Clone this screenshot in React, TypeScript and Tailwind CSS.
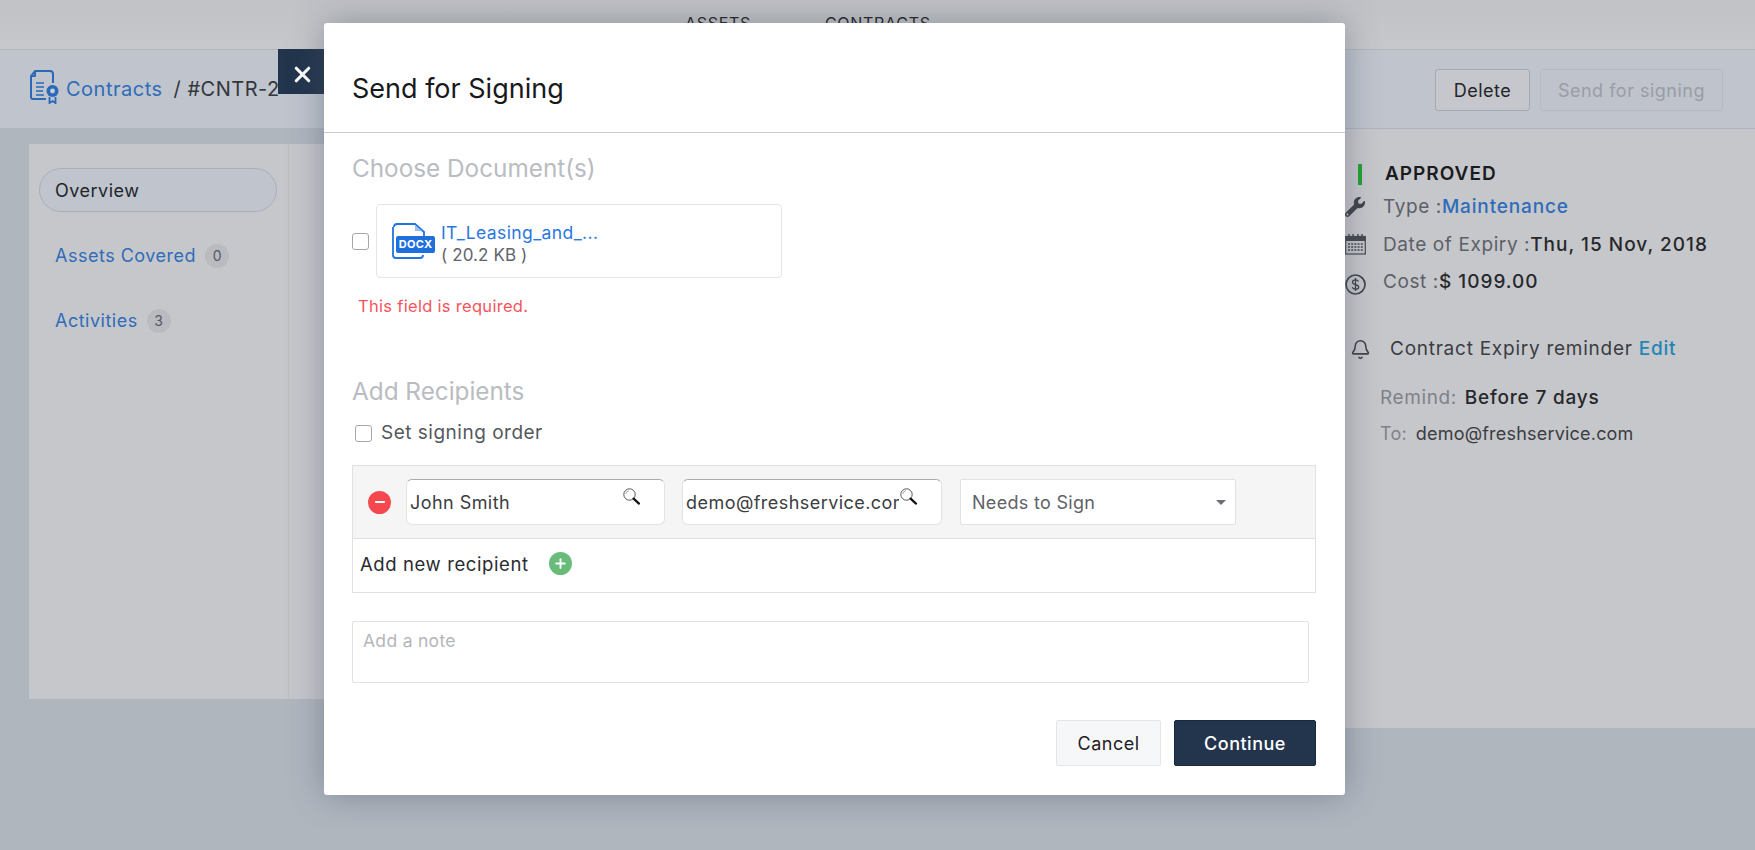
import { Bell, Minus, Plus, X } from "lucide-react";
import { FaWrench } from "react-icons/fa";

const SearchGlass = () => (
  <svg width="19" height="19" viewBox="0 0 19 19" fill="none">
    <circle cx="7.5" cy="7.5" r="5.7" stroke="#555" strokeWidth="1" />
    <path d="M3.8 7a3.6 3.6 0 0 1 3-3.2" stroke="#aaa" strokeWidth="1" />
    <path d="M11.6 11.6 L17 16.6" stroke="#111" strokeWidth="2.2" strokeLinecap="round" />
  </svg>
);

const ContractIcon = () => (
  <svg width="32" height="36" viewBox="0 0 32 36" fill="none" stroke="#2a68b8" strokeWidth="2" className="-mt-[6px] -ml-[1px]">
    <path d="M7 3h15a3 3 0 0 1 3 3v9M3 8v21a2 2 0 0 0 2 2h13M3 8l4-5v5H3z" strokeLinejoin="round" />
    <path d="M8 15h8M8 19h8M8 23h7M8 27h8" strokeWidth="1.5" />
    <circle cx="24.500" cy="23" r="6" fill="#2a68b8" stroke="none" />
    <circle cx="24.500" cy="23" r="2.400" fill="#c3d0e2" stroke="none" />
    <path d="M21.500 29v6l3-2 3 2v-6" strokeWidth="1.8" />
  </svg>
);

const DocxIcon = () => (
  <div className="relative w-[44px] h-[37px] shrink-0 -ml-[1px]">
    <svg width="44" height="37" viewBox="0 0 44 37" fill="none" className="absolute inset-0">
      <path d="M5 1h18l9 8v5M1 4v28a3 3 0 0 0 3 3h24a3 3 0 0 0 3-3" transform="translate(1 0)" stroke="#1f74e0" strokeWidth="1.8" />
      <path d="M3 4a3 3 0 0 1 3-3" stroke="#1f74e0" strokeWidth="1.8" />
      <path d="M24 2v6h7z" fill="#9cc3f3" />
    </svg>
    <span className="absolute left-[5px] top-[13px] w-[39px] h-[17px] rounded-[2px] bg-[#1f6fdc] text-white text-[11px] font-bold leading-[17px] text-center tracking-[0.3px]">
      DOCX
    </span>
  </div>
);

const CalendarIcon = () => (
  <svg width="21" height="22" viewBox="0 0 21 22" fill="none" className="-mt-[2px]">
    <rect x="0.7" y="3.5" width="19.6" height="17.5" stroke="#45484e" strokeWidth="1.2" />
    <rect x="0.7" y="3.5" width="19.6" height="4.5" fill="#45484e" />
    <path d="M4 1v4M8 1v4M13 1v4M17 1v4" stroke="#45484e" strokeWidth="1.4" />
    <path d="M3 11h15M3 14h15M3 17h15" stroke="#45484e" strokeWidth="1.6" strokeDasharray="2 1.2" />
  </svg>
);

const DollarIcon = () => (
  <svg width="21" height="21" viewBox="0 0 21 21" fill="none" className="mt-[5px]">
    <circle cx="10.5" cy="10.5" r="9.5" stroke="#3f4248" strokeWidth="1.7" />
    <path d="M13.5 7.6c-.5-1.2-1.6-1.7-3-1.7-1.6 0-3 .8-3 2.3 0 3.2 6.2 1.5 6.2 4.7 0 1.5-1.500 2.300-3.200 2.300-1.500 0-2.700-.6-3.200-1.900M10.500 4v13" stroke="#3f4248" strokeWidth="1.3" />
  </svg>
);

function NavCount({ label, count }: { label: string; count: number }) {
  return (
    <div className="flex items-center h-[44px] pl-[26px] mb-[21px] pt-[1px] text-[18px] tracking-[0.5px] text-[#2f6cb9]">
      {label}
      <span className="ml-[9px] w-[24px] h-[24px] rounded-full bg-[#b9bbc0] text-[#55585e] text-[14px] leading-[24px] text-center tracking-normal">
        {count}
      </span>
    </div>
  );
}

function InfoRow({ icon, label, value, link }: { icon: React.ReactNode; label: string; value: string; link?: boolean }) {
  return (
    <div className="flex items-center h-[24px]">
      <span className="w-[38px] flex justify-start">{icon}</span>
      <span className="text-[#5c6068]">{label}</span>
      <span className={link ? "text-[#2f6cb9] font-medium tracking-[0.85px]" : "text-[#26282c] font-medium tracking-[1px]"}>{value}</span>
    </div>
  );
}

function SearchInput({ value }: { value: string }) {
  return (
    <div className="relative">
      <input
        readOnly
        value={value}
        className="block w-full h-[46px] bg-white rounded-[6px] border border-[#e2e3e6] border-t-[#a9abae] pl-[3px] pr-[42px] text-[18px] tracking-[0.45px] text-[#3a3d42] outline-none"
      />
      <span className="absolute top-[8px] right-[24px] w-[19px] h-[19px]">
        <SearchGlass />
      </span>
    </div>
  );
}

export default function App() {
  return (
    <div className="relative w-[1755px] h-[850px] overflow-hidden bg-[#afb6be] font-['Inter',sans-serif] text-[18px] tracking-[0.5px]">
      {/* page behind the overlay */}
      <div className="h-[50px] bg-gradient-to-b from-[#c0c2c6] to-[#c7c8cb] border-b border-[#b3b6bb] flex gap-[74px] pt-[14px] pl-[685px] text-[16px] leading-[18px] text-[#222] tracking-[0.7px]">
        <span>ASSETS</span>
        <span>CONTRACTS</span>
      </div>
      <div className="h-[79px] bg-[#bfc4cd] border-b border-[#aeb4bf] flex items-center pl-[29px] pr-[32px]">
        <ContractIcon />
        <span className="ml-[6px] text-[20px] text-[#2f6cb9]">Contracts</span>
        <span className="ml-[11px] text-[20px] text-[#33363b]">/ #CNTR-2</span>
        <div className="ml-auto flex gap-[10px] mt-[2px]">
          <button className="w-[95px] h-[42px] rounded-[3px] bg-[#c5c7cd] border border-[#a5a9b1] text-[#23252a]">Delete</button>
          <button className="w-[183px] h-[42px] rounded-[3px] bg-[#bfc3cc] border border-[#b6bac3] text-[#9a9da4]">Send for signing</button>
        </div>
      </div>
      <div className="flex">
        <div className="ml-[29px] mt-[15px] w-[1271px] h-[555px] bg-[#c6c7cb] flex">
          <div className="w-[260px] h-full border-r border-[#bcbdc2] pt-[24px] pl-[10px] pr-[11px]">
            <div className="h-[44px] mb-[21px] pt-[1px] flex items-center pl-[15px] rounded-full bg-[#bfc4cd] border border-[#a9b0bc] text-[#23252a]">
              Overview
            </div>
            <div className="-ml-[10px]">
              <NavCount label="Assets Covered" count={0} />
              <NavCount label="Activities" count={3} />
            </div>
          </div>
        </div>
        <div className="flex-1 h-[599px] bg-[#c6c7cb] pl-[45px] text-[19px] tracking-[0.6px] text-[#3a3d42]">
          <div className="flex items-center h-[24px] mt-[33px]">
            <span className="ml-[13px] w-[4px] h-[21px] bg-[#22a030]" />
            <span className="ml-[23px] font-semibold tracking-[1px] text-[#1a1b1e]">APPROVED</span>
          </div>
          <div className="mt-[9px]">
            <InfoRow icon={<FaWrench className="text-[#3f4248] text-[20px]" />} label="Type :" value="Maintenance" link />
          </div>
          <div className="mt-[14px]">
            <InfoRow icon={<CalendarIcon />} label="Date of Expiry :" value="Thu, 15 Nov, 2018" />
          </div>
          <div className="mt-[13px]">
            <InfoRow icon={<DollarIcon />} label="Cost :" value="$ 1099.00" />
          </div>
          <div className="flex items-center h-[24px] mt-[43px] ml-[5px] tracking-[0.75px]">
            <Bell size={21} color="#3f4248" strokeWidth={1.8} />
            <span className="ml-[19px]">Contract Expiry reminder</span>
            <span className="ml-[6px] text-[#1f86b5] font-medium">Edit</span>
          </div>
          <div className="mt-[25px] ml-[35px] h-[24px] flex items-center">
            <span className="text-[#7f8289]">Remind:</span>
            <span className="ml-[8px] font-medium text-[#26282c] tracking-[0.8px]">Before 7 days</span>
          </div>
          <div className="mt-[11px] ml-[35px] h-[24px] flex items-center text-[18px] tracking-[0.2px] text-[#3a3d42]">
            <span className="text-[#7f8289]">To:</span>
            <span className="ml-[9px]">demo@freshservice.com</span>
          </div>
        </div>
      </div>

      {/* close tab */}
      <button className="absolute left-[278px] top-[49px] w-[46px] h-[45px] bg-[#22354d] flex items-center justify-center pl-[3px] pt-[5px]">
        <X size={25} color="white" strokeWidth={3} />
      </button>

      {/* modal */}
      <div className="absolute left-[324px] top-[23px] w-[1021px] h-[772px] bg-white rounded-[3px] shadow-[0_0_34px_rgba(70,80,100,0.45)]">
        <div className="h-[110px] border-b border-[#c9cbcf] pl-[28px] pt-[48px] text-[27px] leading-[36px] tracking-normal text-[#18191c]">
          Send for Signing
        </div>
        <div className="pl-[28px]">
          <div className="mt-[20px] h-[30px] text-[24.3px] leading-[30px] tracking-normal text-[#b9bcc1]">Choose Document(s)</div>
          <div className="mt-[21px] flex items-center">
            <span className="w-[17px] h-[17px] rounded-[3px] border border-[#a5a7ab] bg-white" />
            <div className="ml-[7px] w-[406px] h-[74px] rounded-[4px] border border-[#e3e5e8] flex items-center pl-[15px]">
              <DocxIcon />
              <div className="ml-[6px] pt-[6px] text-[17px] leading-[23px] tracking-[0.1px]">
                <div className="text-[#2a78de] text-[17.5px] tracking-[0.4px]">IT_Leasing_and_...</div>
                <div className="text-[#62656b]">( 20.2 KB )</div>
              </div>
            </div>
          </div>
          <div className="mt-[18px] ml-[6px] h-[20px] text-[16.5px] leading-[20px] tracking-[0.3px] text-[#f4545c]">This field is required.</div>
          <div className="mt-[60px] h-[30px] text-[24.3px] leading-[30px] tracking-normal text-[#b9bcc1]">Add Recipients</div>
          <div className="mt-[17px] ml-[3px] h-[20px] flex items-center">
            <span className="w-[17px] h-[17px] rounded-[3px] border border-[#a5a7ab] bg-white" />
            <span className="ml-[9px] text-[#55585e] text-[19px] tracking-[0.5px]">Set signing order</span>
          </div>
          <div className="mt-[22px] w-[964px] border border-[#e0e1e3]">
            <div className="h-[73px] bg-[#f5f5f5] border-b border-[#dfe0e2] flex items-center pl-[15px]">
              <span className="w-[23px] h-[23px] rounded-full bg-[#f4484e] flex items-center justify-center">
                <Minus size={14} color="white" strokeWidth={3.5} />
              </span>
              <div className="ml-[15px] w-[259px]">
                <SearchInput value="John Smith" />
              </div>
              <div className="ml-[17px] w-[260px]">
                <SearchInput value="demo@freshservice.com" />
              </div>
              <div className="ml-[18px] w-[276px] h-[46px] rounded-[2px] bg-white border border-[#dfe2e6] flex items-center pl-[11px] pr-[9px] tracking-[0.3px] text-[#5f6268]">
                Needs to Sign
                <span className="ml-auto w-0 h-0 border-x-[5px] border-x-transparent border-t-[5px] border-t-[#6c6e78]" />
              </div>
            </div>
            <div className="h-[53px] bg-white flex items-center pl-[7px] pb-[1px] text-[18.5px] tracking-[0.6px] text-[#2a2c30]">
              Add new recipient
              <span className="ml-[20px] -mt-[4px] w-[23px] h-[23px] rounded-full bg-[#69bb7a] flex items-center justify-center">
                <Plus size={15} color="white" strokeWidth={3} />
              </span>
            </div>
          </div>
          <textarea
            readOnly
            placeholder="Add a note"
            className="block mt-[28px] w-[957px] h-[62px] rounded-[2px] border border-[#dfe3e8] pl-[10px] pt-[9px] text-[17.5px] leading-[20px] tracking-[0.3px] outline-none resize-none placeholder:text-[#b4b6ba]"
          />
          <div className="mt-[37px] w-[964px] flex justify-end gap-[13px]">
            <button className="w-[105px] h-[46px] pt-[1px] rounded-[2px] bg-[#f6f7f9] border border-[#e2e5ea] text-[#1f2124]">Cancel</button>
            <button className="w-[142px] h-[46px] rounded-[2px] bg-[#22354d] border border-[#1a2a3e] text-white font-medium">Continue</button>
          </div>
        </div>
      </div>
    </div>
  );
}
